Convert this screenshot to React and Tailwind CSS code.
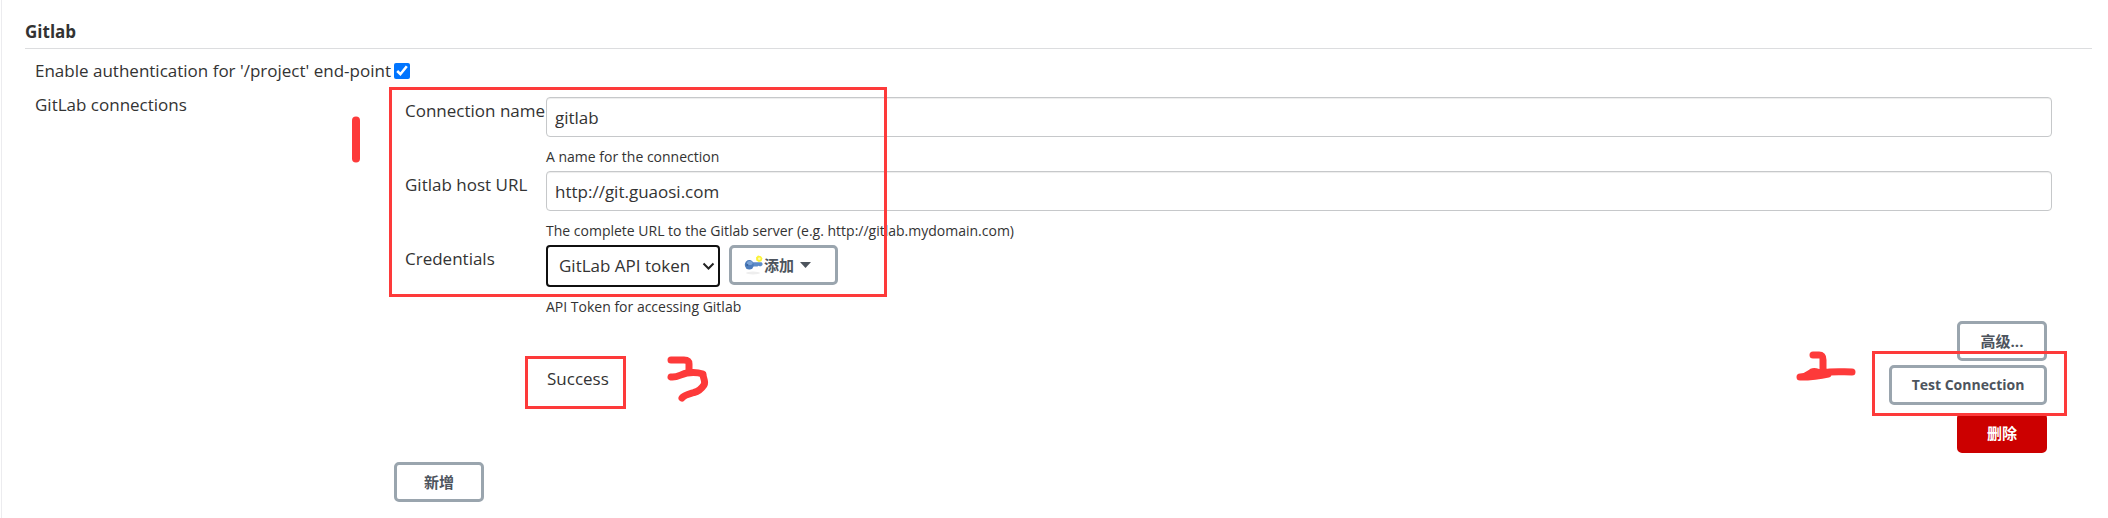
import React from "react";

const buttonBase =
  "flex h-10 items-center rounded-[5px] border-[3px] leading-5 font-bold";
const outline = "border-[#9aa5ae] bg-white text-[#4d545d]";

function Mark({ className, viewBox, d, width = 9 }) {
  return (
    <svg className={className} viewBox={viewBox} fill="none" aria-hidden="true">
      <path d={d} stroke="#fd3a3a" strokeWidth={width} strokeLinecap="round" strokeLinejoin="round" />
    </svg>
  );
}

function TextField({ id, label, value, help }) {
  return (
    <div className="grid grid-cols-[141px_1fr]">
      <label htmlFor={id} className="text-[17px] leading-7 whitespace-nowrap">{label}</label>
      <div>
        <input
          id={id}
          type="text"
          defaultValue={value}
          className="block h-10 w-full rounded-[4px] border border-[#c6c8ca] bg-white px-2 text-[17px] shadow-[inset_0_1px_1px_rgba(0,0,0,0.075)]"
        />
        <p className="mt-2 mb-0.5 text-[14px] leading-6">{help}</p>
      </div>
    </div>
  );
}

function KeyIcon() {
  return (
    <svg className="h-5 w-5 shrink-0" viewBox="0 0 20 20" aria-hidden="true">
      <ellipse cx="9" cy="18" rx="7" ry="1.4" fill="#eeeeee" />
      <path d="M14 0.5 17 1.2 18.5 3.5 17.5 6.2 14.8 7 12.3 5.4 12 2.6Z" fill="#fbf236" />
      <circle cx="15.3" cy="3.7" r="1.3" fill="#fffbb0" />
      <path d="M8 7.3H17.5L18.5 8.5V10L17 11.3H15.5L14.5 10.7 13.5 11.5H8Z" fill="#5d8bc8" />
      <ellipse cx="5.3" cy="9.8" rx="4.5" ry="4.8" fill="#4c7cbb" />
      <ellipse cx="5.8" cy="8" rx="2.8" ry="2" fill="#7ba3d6" />
      <circle cx="3.3" cy="10" r="1.1" fill="#39619a" />
    </svg>
  );
}

export default function App() {
  return (
    <main className="border-l border-white bg-white font-['Open_Sans','Noto_Sans_CJK_SC',sans-serif] text-[#333333]">
      <div className="border-l border-[#ececef] pt-[18px] pr-4 pb-4 pl-[23px]">
        <h2 className="border-b border-[#dcdddf] pb-0.5 text-[17px] leading-7 font-bold">Gitlab</h2>

        <div className="mt-2 flex items-center gap-2 pl-[10px]">
          <label htmlFor="auth" className="w-[351px] text-[17px] leading-7 whitespace-nowrap">
            Enable authentication for '/project' end-point
          </label>
          <input id="auth" type="checkbox" defaultChecked className="h-4 w-4 accent-[#0075ff]" />
        </div>

        <div className="mt-1.5 grid grid-cols-[359px_1fr] pr-10 pl-[10px]">
          <h3 className="text-[17px] leading-7">GitLab connections</h3>
          <div>
            <div className="relative mt-[6px] pl-[11px]">
              <TextField id="name" label="Connection name" value="gitlab" help="A name for the connection" />
              <TextField
                id="url"
                label="Gitlab host URL"
                value="http://git.guaosi.com"
                help="The complete URL to the Gitlab server (e.g. http://gitlab.mydomain.com)"
              />
              <div className="grid grid-cols-[141px_1fr]">
                <label htmlFor="credentials" className="text-[17px] leading-7">Credentials</label>
                <div>
                  <div className="flex items-start gap-[9px]">
                    <div className="relative">
                      <select
                        id="credentials"
                        className="block h-[42px] w-[174px] appearance-none rounded-[4px] border-2 border-[#101010] bg-white pl-[11px] text-[17px]"
                      >
                        <option>GitLab API token</option>
                      </select>
                      <svg
                        className="pointer-events-none absolute top-[17px] right-[5px] h-[9px] w-[13px]"
                        viewBox="0 0 13 9"
                        fill="none"
                        aria-hidden="true"
                      >
                        <path d="M1.500 1.500 6.500 6.500 11.500 1.500" stroke="#222222" strokeWidth="2" />
                      </svg>
                    </div>
                    <button type="button" className={`${buttonBase} ${outline} w-[109px] pl-3 text-[15px]`}>
                      <KeyIcon />
                      <span>添加</span>
                      <svg className="ml-1.5 h-[6px] w-[11px]" viewBox="0 0 11 6" aria-hidden="true">
                        <path d="M0 0H11L5.5 6Z" fill="#4d545d" />
                      </svg>
                    </button>
                  </div>
                  <p className="mt-2 mb-0.5 text-[14px] leading-6">API Token for accessing Gitlab</p>
                </div>
              </div>

              <div className="pointer-events-none absolute -top-[10px] -left-[5px] h-[210px] w-[498px] border-[3px] border-[#fd3a3a]" />
              <Mark
                className="pointer-events-none absolute top-[19px] -left-[43px] h-[47px] w-[10px]"
                viewBox="0 0 10 47"
                d="M5 4.5V42.5"
                width={8}
              />
            </div>

            <div className="flex flex-col items-end pr-[5px]">
              <button type="button" className={`${buttonBase} ${outline} w-[90px] justify-center text-[15px]`}>
                高级...
              </button>
              <div className="mt-1 flex w-full items-start justify-between pl-[153px]">
                <div className="relative text-[17px] leading-7">
                  <output>Success</output>
                  <div className="pointer-events-none absolute -top-[9px] -left-[22px] h-[53px] w-[101px] border-[3px] border-[#fd3a3a]" />
                  <Mark
                    className="pointer-events-none absolute -top-[9px] left-[120px] h-[46px] w-[42px]"
                    viewBox="0 0 42 46"
                    d="M4 4H17C20 4 22 5 22 8V15M4 21C10 22 14 18 20 17C26 16 33 17 36 18C36 23 39 25 37 29C35 32 33 35 27 36.500C22 38 17 39 15 42"
                    width={7}
                  />
                </div>
                <div className="relative">
                  <button type="button" className={`${buttonBase} ${outline} w-[158px] justify-center text-[14px]`}>
                    Test Connection
                  </button>
                  <div className="pointer-events-none absolute -top-[14px] -left-[17px] z-10 h-[65px] w-[195px] border-[3px] border-[#fd3a3a]" />
                  <Mark
                    className="pointer-events-none absolute -top-[14px] -left-[93px] h-[30px] w-[60px]"
                    viewBox="0 0 60 30"
                    d="M17 4H23C27 4 27 6 27 9V18M4 26C10 26 12 24 16 21C20 19 23 23 27 22C36 20 46 21 56 21M4 26C17 26 24 25 32 23"
                    width={7}
                  />
                </div>
              </div>
              <button
                type="button"
                className={`${buttonBase} mt-2 w-[90px] justify-center border-[#cc0000] bg-[#cc0000] text-[15px] text-white`}
              >
                删除
              </button>
            </div>
            <button type="button" className={`${buttonBase} ${outline} mt-[9px] w-[90px] justify-center text-[15px]`}>
              新增
            </button>
          </div>
        </div>
      </div>
    </main>
  );
}
